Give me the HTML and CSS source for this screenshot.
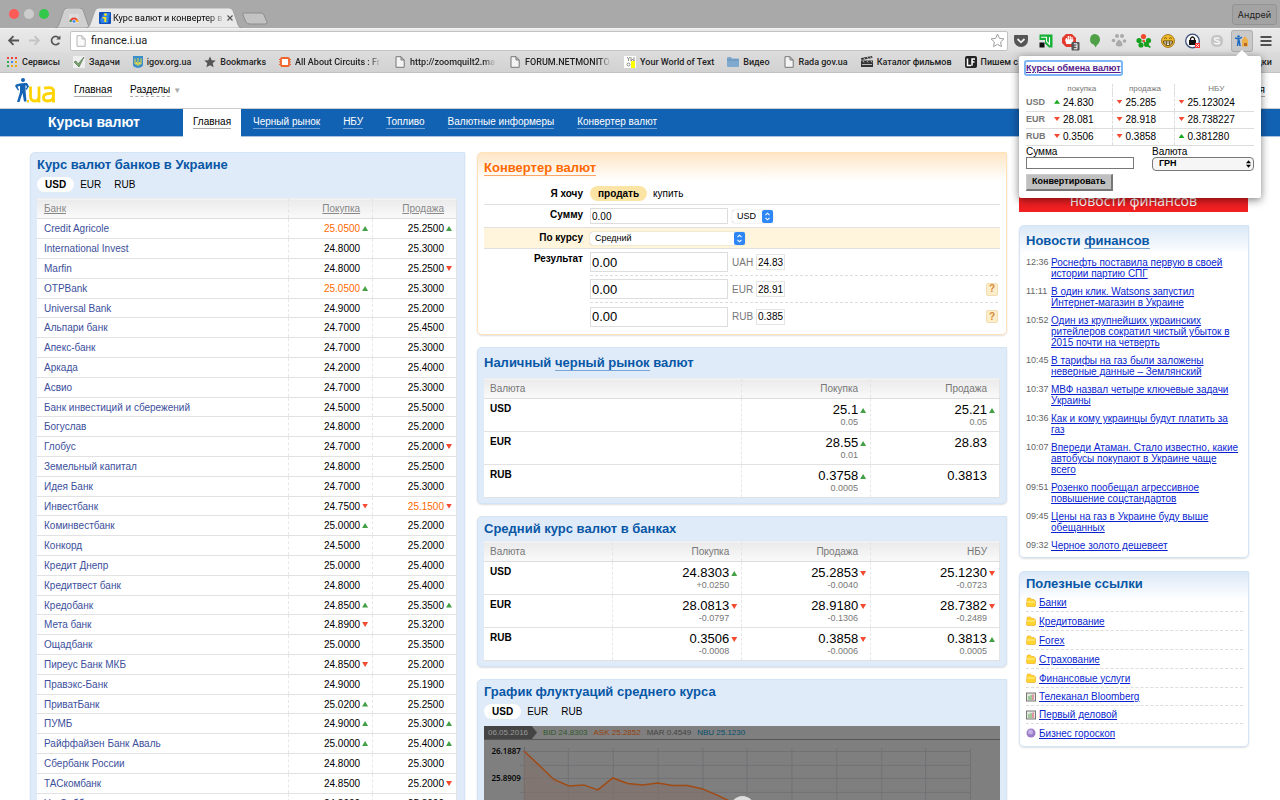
FILE: index.html
```html
<!DOCTYPE html>
<html lang="ru">
<head>
<meta charset="utf-8">
<title>Курс валют и конвертер валют</title>
<link rel="stylesheet" href="styles.css">
</head>
<body>
<svg class="defs" aria-hidden="true">
  <symbol id="doc" viewBox="0 0 10 12"><path d="M1 .7h5L9.200 4v7.300H1zM6 .7V4h3.200" fill="#f4f4f4" stroke="#777" stroke-width="1"/></symbol>
  <symbol id="chev" viewBox="0 0 11 13"><rect width="11" height="13" rx="2" fill="#2f86f6"/><path d="M3.500 5.200l2-2 2 2M3.500 7.800l2 2 2-2" fill="none" stroke="#fff" stroke-width="1.100"/></symbol>
  <symbol id="folder" viewBox="0 0 10 10"><path d="M1 2.500Q1 1 2 1h2.500l1 1.500H8L9.500 4v4.500q0 1-1 1h-7Q.5 9.500.5 8.500z" fill="#ffd52e" stroke="#f0a519" stroke-width=".6"/><path d="M1 5h8" stroke="#fff0a0" stroke-width="1"/></symbol>
  <symbol id="tv" viewBox="0 0 10 10"><rect x=".5" y="1" width="9" height="8" fill="#e4e9e0" stroke="#777"/><path d="M3 8V4M5 8V3" stroke="#7bb87a" stroke-width="1.300"/><path d="M7 8V2.500" stroke="#e0718c" stroke-width="1.400"/></symbol>
</svg>
<div class="window">
  <header class="tabstrip">
    <div class="lights"><i class="red"></i><i class="grey"></i><i class="green"></i></div>
    <div class="tab pinned">
      <svg class="tabshape" viewBox="0 0 38 20" preserveAspectRatio="none"><path d="M0 20Q3 20 4 17L9 3Q10 0 13 0H26Q29 0 30 3L35 17Q36 20 38 20z" fill="#d0d0d0" stroke="#8c8c8c" stroke-width=".8"/></svg>
      <svg class="ico" viewBox="0 0 12 12"><path d="M1 2h10v9H1z" fill="#ddd"/><path d="M1.500 10a4.500 4.500 0 0 1 9 0z" fill="#e54335"/><path d="M1.500 10a4.500 4.500 0 0 1 .8-2.500L5 10z" fill="#34a853"/><path d="M10.500 10H7l2-3z" fill="#fbc116"/><circle cx="6" cy="9.500" r="1.800" fill="#4285f4" stroke="#fff" stroke-width=".6"/></svg>
    </div>
    <div class="tab active">
      <svg class="tabshape" viewBox="0 0 158 20" preserveAspectRatio="none"><path d="M0 20Q3 20 4 17L9 3Q10 0 13 0H145Q148 0 149 3L154 17Q155 20 158 20z" fill="#e9e9e9" stroke="#8c8c8c" stroke-width=".6"/></svg>
      <svg class="ico" viewBox="0 0 12 12"><rect width="12" height="12" rx="1" fill="#124fb8"/><path d="M1 8l4-7h6L9 11H2z" fill="#2d83e6"/><circle cx="6.500" cy="2.600" r="1.400" fill="#ffe11a"/><path d="M3.500 5h3.800v5h-2V6.500H3.500z" fill="#ffe11a"/></svg>
      <span class="fade tabtitle">Курс валют и конвертер в</span>
      <button class="close" aria-label="Закрыть"><svg viewBox="0 0 6 6"><path d="M.5.5l5 5M5.500.5l-5 5" stroke="#555" stroke-width="1.200"/></svg></button>
    </div>
    <svg class="newtab" viewBox="0 0 26 13"><path d="M2 1h17q2 0 3 2l3 7q1 2-2 2H8q-3 0-4-2L1 3Q0 1 2 1z" fill="#c3c3c3" stroke="#8c8c8c"/></svg>
    <button class="user">Андрей</button>
  </header>

  <div class="toolbar">
    <div class="navs">
      <svg viewBox="0 0 14 14"><path d="M13 7H2.500M7 2.300L2.300 7 7 11.700" fill="none" stroke="#555" stroke-width="2"/></svg>
      <svg viewBox="0 0 14 14"><path d="M1 7h10.500M7 2.300L11.700 7 7 11.700" fill="none" stroke="#c4c4c4" stroke-width="2"/></svg>
      <svg viewBox="0 0 14 14"><path d="M11 9.500A4.500 4.500 0 1 1 10.500 4" fill="none" stroke="#555" stroke-width="1.800"/><path d="M12.300 1.500V6H7.800z" fill="#555"/></svg>
    </div>
    <label class="urlbar">
      <svg class="docico" viewBox="0 0 10 12"><path d="M1 .7h5L9.200 4v7.300H1zM6 .7V4h3.200" fill="#fafafa" stroke="#b5b5b5"/></svg>
      <input type="text" value="finance.i.ua" aria-label="Адрес">
      <svg class="star" viewBox="0 0 14 14"><path d="M7 1l1.800 4 4.200.5-3.100 2.900.8 4.300L7 10.600l-3.700 2.100.8-4.300L1 5.500 5.200 5z" fill="none" stroke="#999" stroke-width=".9"/></svg>
    </label>
    <div class="exts">
      <svg viewBox="0 0 20 20"><path d="M3 5q0-1 1-1h12q1 0 1 1v4a7 7 0 0 1-14 0z" fill="#555"/><path d="M6.500 8l3.500 3.300L13.500 8" fill="none" stroke="#eee" stroke-width="1.800"/></svg>
      <svg viewBox="0 0 20 20"><path d="M3.500 3.500h13v13H13L9 12.500V9H3.500z" fill="#19b038"/><path d="M5 6.300h5.500v4l3 3V6" fill="none" stroke="#fff" stroke-width="1.100"/><rect x="3.500" y="11.500" width="5" height="5" fill="#111"/></svg>
      <svg viewBox="0 0 20 20"><path d="M6 3h6l4 4v5l-4 4H6l-4-4V7z" fill="#e33b2e"/><path d="M6.500 10V7M8.300 9V5M10.200 9V5M12 10V6M5.800 9l1 3.500h4.500L12.800 9z" fill="#fff" stroke="#fff" stroke-width="1.200"/><rect x="11.500" y="11" width="8" height="8.500" rx="1" fill="#555"/><path d="M13.800 12.800h3.200v5h-3.200M14.300 15.200H17" fill="none" stroke="#fff"/></svg>
      <svg viewBox="0 0 20 20"><path d="M9.500 3a5.500 5.500 0 0 1 5.500 5.500c0 3.500-3 5-4.500 8-.5-1.500-1-2.500-2-3A5.500 5.500 0 0 1 9.500 3z" fill="#4fa046"/></svg>
      <svg viewBox="0 0 20 20" fill="#aaa"><circle cx="8" cy="5" r="2"/><circle cx="13" cy="5" r="2"/><circle cx="4.500" cy="9.500" r="1.800"/><circle cx="15.500" cy="10" r="1.800"/><path d="M10 8.500q4 3 3.500 6-3 2-6.500 0Q6 11.500 10 8.500z"/></svg>
      <svg viewBox="0 0 20 20" fill="#16a01d"><circle cx="9.500" cy="5.500" r="2.600" fill="#ef4b2e"/><circle cx="5" cy="9.500" r="2.600"/><circle cx="14.500" cy="9.500" r="2.600"/><circle cx="7" cy="14" r="2.600"/><circle cx="12.500" cy="13.500" r="2.500"/><path d="M9 9l8 7-1.500 1L8 10z"/><circle cx="9.800" cy="10" r="1.300" fill="#ef4b2e"/></svg>
      <svg viewBox="0 0 20 20"><circle cx="10" cy="10" r="6.500" fill="#f0ba28" stroke="#90660e" stroke-width=".8"/><path d="M5.500 10h9q0 4.500-4.500 4.500T5.500 10z" fill="#fff" stroke="#5e450c"/><path d="M6 7.500q1.500-1.500 3 0M11 7.500q1.500-1.500 3 0M5.500 12h9M8.500 10v4M11.500 10v4" fill="none" stroke="#5e450c" stroke-width=".8"/></svg>
      <svg viewBox="0 0 20 20"><circle cx="9.500" cy="10" r="6.800" fill="#fff" stroke="#3b4f79" stroke-width="1.300"/><rect x="6" y="9" width="7" height="5" fill="#111"/><path d="M7.500 9V7.500q2-3 4 0V9" fill="none" stroke="#111" stroke-width="1.300"/><rect x="12" y="12" width="5" height="5" fill="#f33"/><path d="M13 13l3 3m0-3l-3 3" stroke="#fff" stroke-width=".8"/></svg>
      <svg viewBox="0 0 20 20"><rect x="4" y="4" width="12" height="12" rx="5" fill="#c5c5c5"/><path d="M12.500 7.500q-5-1.500-5 .8c0 1.700 5 1 5 3 0 2-4 2-5.500.5" fill="none" stroke="#f5f5f5" stroke-width="1.500"/></svg>
      <svg class="pressed" viewBox="0 0 20 20"><path d="M3 7l4 1 3-2M6.500 8l-1 7M7 9l1 6" stroke="#1b69bf" stroke-width="1.500" fill="none"/><circle cx="6.500" cy="5.500" r="1.300" fill="#1b69bf"/><path d="M10 9l3-4 3 4v6.500h-6z" fill="#edb04c"/><path d="M12 12h3v3h-3z" fill="#b46a20"/></svg>
      <svg viewBox="0 0 20 20"><path d="M4.500 6h11M4.500 10h11M4.500 14h11" stroke="#505050" stroke-width="2.200"/></svg>
    </div>
  </div>

  <nav class="bookmarks">
    <a href="#"><svg viewBox="0 0 12 12"><path d="M1 1h2v2H1zM5 1h2v2H5zM9 1h2v2H9z" fill="#e8453c"/><path d="M1 5h2v2H1z" fill="#34a853"/><path d="M5 5h2v2H5z" fill="#4285f4"/><path d="M9 5h2v2H9zM9 9h2v2H9zM5 9h2v2H5z" fill="#f2a60c"/><path d="M1 9h2v2H1z" fill="#34a853"/></svg>Сервисы</a>
    <a href="#"><svg viewBox="0 0 12 12"><rect width="12" height="12" fill="#eee"/><path d="M1 6l2-1 2 3 6-7-5 10z" fill="#79a96a" stroke="#4c6649" stroke-width=".6"/></svg>Задачи</a>
    <a href="#" class="tight"><svg viewBox="0 0 10 12"><path d="M0 0h10v9q0 2-5 3Q0 11 0 9z" fill="#398fc9"/><path d="M2 2.500V8h6V2.500M5 2v8M3.500 6v2M6.500 6v2" fill="none" stroke="#f5df3c" stroke-width="1"/></svg>igov.org.ua</a>
    <a href="#"><svg viewBox="0 0 12 12"><path d="M6 .5l1.700 3.700 4 .4-3 2.700.9 4L6 9.200l-3.600 2.100.9-4-3-2.700 4-.4z" fill="#555"/></svg>Bookmarks</a>
    <a href="#"><svg viewBox="0 0 12 12"><rect x="2" y="2" width="8" height="8" rx="1" fill="#fff" stroke="#f0642c" stroke-width="1.800"/><path d="M0 3.500h2M0 6h2M0 8.500h2M10 3.500h2M10 6h2M10 8.500h2" stroke="#f0642c"/></svg><span class="fade bm">All About Circuits : Fr</span></a>
    <a href="#"><svg><use href="#doc"/></svg><span class="fade bm">http://zoomquilt2.ma</span></a>
    <a href="#"><svg><use href="#doc"/></svg><span class="fade bm">FORUM.NETMONITO</span></a>
    <a href="#"><svg viewBox="0 0 12 12"><rect width="12" height="12" fill="#fff"/><rect x="7" y="5" width="4" height="7" fill="#ff0"/><path d="M3 1l1.500 2L6 1M4.500 3v2M7 1v4l1.500-2L10 5V1" fill="none" stroke="#666" stroke-width=".7"/><circle cx="4.500" cy="8.500" r="1.500" fill="none" stroke="#666" stroke-width=".7"/></svg>Your World of Text</a>
    <a href="#"><svg viewBox="0 0 12 12"><path d="M0 2q0-1 1-1h3l1 1.500h6q1 0 1 1V10q0 1-1 1H1q-1 0-1-1z" fill="#7fa9cf"/><path d="M0 4h12" stroke="#5d87ad" stroke-width=".7"/></svg>Видео</a>
    <a href="#"><svg><use href="#doc"/></svg>Rada gov.ua</a>
    <a href="#"><svg viewBox="0 0 12 12"><path d="M0 4.500h12V11H0zM0 2l11-2 .5 2L.5 4z" fill="#333"/><path d="M2.500 1.500l1.500 2M6 1l1.500 2M9 .5l1.500 2M2 5l1 1.500M6 5l1 1.500M10 5l1 1.500M1 8.500h10" stroke="#ddd" stroke-width=".8"/></svg>Каталог фильмов</a>
    <a href="#"><svg viewBox="0 0 12 12"><rect width="12" height="12" rx="2" fill="#222"/><path d="M2.500 2.500v7H6M7 9.800V3h3M7 6h2.500" fill="none" stroke="#fff" stroke-width="1.500"/></svg>Пишем с</a>
    <a href="#" class="other">Закладки</a>
  </nav>

  <div class="page">
    <div class="sitehead">
      <svg class="logo" viewBox="0 0 41 25"><circle cx="8" cy="2" r="2" fill="#1563b5"/><path d="M1 6.500Q5 4.500 12 5l2 3.500-2.500 3.500-1-1 1.500-2-1.500-2v5l1 11.500H9L7.500 15 4.500 24H2L5 14V8L2.500 8.500 4 12l-1 .5L0 8z" fill="#1563b5"/><path d="M12 22h2v2.500h-2z" fill="#ffd400"/><path d="M15.500 8.500v9.500q0 5 4 5 4.500 0 4.500-4.500V8.500m0 8v8M29 10.200q9.500-2 9.500 3V24.500m0-9q-10-.8-10 4 0 3.500 3.800 3.500 6.200 0 6.200-5" fill="none" stroke="#ffd400" stroke-width="2.800"/></svg>
      <a href="#">Главная</a>
      <a href="#" class="dash">Разделы</a><span class="more">▼</span>
      <a href="#" class="reg">Регистрация</a>
    </div>
    <nav class="sitenav">
      <strong>Курсы валют</strong>
      <div class="current"><a href="#">Главная</a></div>
      <div class="items"><a href="#">Черный рынок</a><a href="#">НБУ</a><a href="#">Топливо</a><a href="#">Валютные информеры</a><a href="#">Конвертер валют</a></div>
    </nav>

    <main class="columns">
      <section class="panel banks">
        <h2>Курс валют банков в Украине</h2>
        <div class="pills"><button class="on">USD</button><button>EUR</button><button>RUB</button></div>
        <table class="grid">
          <thead><tr><th><a href="#">Банк</a></th><th class="n"><a href="#">Покупка</a></th><th class="n"><a href="#">Продажа</a></th></tr></thead>
          <tbody>
            <tr><td><a href="#">Credit Agricole</a></td><td class="up best">25.0500</td><td class="up">25.2500</td></tr>
            <tr><td><a href="#">International Invest</a></td><td>24.8000</td><td>25.3000</td></tr>
            <tr><td><a href="#">Marfin</a></td><td>24.8000</td><td class="down">25.2500</td></tr>
            <tr><td><a href="#">OTPBank</a></td><td class="up best">25.0500</td><td>25.3000</td></tr>
            <tr><td><a href="#">Universal Bank</a></td><td>24.9000</td><td>25.2000</td></tr>
            <tr><td><a href="#">Альпари банк</a></td><td>24.7000</td><td>25.4500</td></tr>
            <tr><td><a href="#">Апекс-банк</a></td><td>24.7000</td><td>25.3000</td></tr>
            <tr><td><a href="#">Аркада</a></td><td>24.2000</td><td>25.4000</td></tr>
            <tr><td><a href="#">Асвио</a></td><td>24.7000</td><td>25.3000</td></tr>
            <tr><td><a href="#">Банк инвестиций и сбережений</a></td><td>24.5000</td><td>25.5000</td></tr>
            <tr><td><a href="#">Богуслав</a></td><td>24.8000</td><td>25.2000</td></tr>
            <tr><td><a href="#">Глобус</a></td><td>24.7000</td><td class="down">25.2000</td></tr>
            <tr><td><a href="#">Земельный капитал</a></td><td>24.8000</td><td>25.2500</td></tr>
            <tr><td><a href="#">Идея Банк</a></td><td>24.7000</td><td>25.3000</td></tr>
            <tr><td><a href="#">Инвестбанк</a></td><td class="down">24.7500</td><td class="down best">25.1500</td></tr>
            <tr><td><a href="#">Коминвестбанк</a></td><td class="up">25.0000</td><td>25.2000</td></tr>
            <tr><td><a href="#">Конкорд</a></td><td>24.5000</td><td>25.2000</td></tr>
            <tr><td><a href="#">Кредит Днепр</a></td><td>25.0000</td><td>25.4000</td></tr>
            <tr><td><a href="#">Кредитвест банк</a></td><td>24.8000</td><td>25.4000</td></tr>
            <tr><td><a href="#">Кредобанк</a></td><td class="up">24.8500</td><td class="up">25.3500</td></tr>
            <tr><td><a href="#">Мета банк</a></td><td class="down">24.8900</td><td>25.3200</td></tr>
            <tr><td><a href="#">Ощадбанк</a></td><td>25.0000</td><td>25.3500</td></tr>
            <tr><td><a href="#">Пиреус Банк МКБ</a></td><td class="down">24.8500</td><td>25.2000</td></tr>
            <tr><td><a href="#">Правэкс-Банк</a></td><td>24.9000</td><td>25.1900</td></tr>
            <tr><td><a href="#">ПриватБанк</a></td><td class="up">25.0200</td><td>25.2500</td></tr>
            <tr><td><a href="#">ПУМБ</a></td><td class="up">24.9000</td><td class="up">25.3000</td></tr>
            <tr><td><a href="#">Райффайзен Банк Аваль</a></td><td class="up">25.0000</td><td class="up">25.4000</td></tr>
            <tr><td><a href="#">Сбербанк России</a></td><td>24.8000</td><td>25.3000</td></tr>
            <tr><td><a href="#">ТАСкомбанк</a></td><td>24.8500</td><td class="down">25.2000</td></tr>
            <tr><td><a href="#">УкрСиббанк</a></td><td>24.8000</td><td>25.3000</td></tr>
          </tbody>
        </table>
      </section>

      <div class="middle">
        <section class="panel converter">
          <h2><a href="#">Конвертер валют</a></h2>
          <div class="row want"><span class="lab">Я хочу</span><button class="sell">продать</button><button class="buy">купить</button></div>
          <div class="row sum"><label class="lab" for="sum">Сумму</label><input id="sum" class="amount" value="0.00">
            <span class="sel cur"><select aria-label="Валюта суммы"><option>USD</option></select><svg><use href="#chev"/></svg></span></div>
          <div class="row rate"><label class="lab" for="rate">По курсу</label>
            <span class="sel kind"><select id="rate"><option>Средний</option></select><svg><use href="#chev"/></svg></span></div>
          <div class="row results">
            <span class="lab">Результат</span>
            <div class="list">
              <div><input class="amount big" value="0.00" aria-label="Результат UAH"><label for="r1">UAH</label><input id="r1" class="ratev" value="24.83"></div>
              <div><input class="amount big" value="0.00" aria-label="Результат EUR"><label for="r2">EUR</label><input id="r2" class="ratev" value="28.91"><button class="help">?</button></div>
              <div><input class="amount big" value="0.00" aria-label="Результат RUB"><label for="r3">RUB</label><input id="r3" class="ratev" value="0.385"><button class="help">?</button></div>
            </div>
          </div>
        </section>

        <section class="panel market">
          <h2>Наличный <a href="#">черный рынок</a> валют</h2>
          <table class="grid rates three">
            <thead><tr><th>Валюта</th><th class="n">Покупка</th><th class="n">Продажа</th></tr></thead>
            <tbody>
              <tr><th>USD</th><td><span class="up">25.1</span><small>0.05</small></td><td><span class="up">25.21</span><small>0.05</small></td></tr>
              <tr><th>EUR</th><td><span class="up">28.55</span><small>0.01</small></td><td>28.83</td></tr>
              <tr><th>RUB</th><td><span class="up">0.3758</span><small>0.0005</small></td><td>0.3813</td></tr>
            </tbody>
          </table>
        </section>

        <section class="panel average">
          <h2>Средний курс валют в банках</h2>
          <table class="grid rates four">
            <thead><tr><th>Валюта</th><th class="n">Покупка</th><th class="n">Продажа</th><th class="n">НБУ</th></tr></thead>
            <tbody>
              <tr><th>USD</th><td><span class="up">24.8303</span><small>+0.0250</small></td><td><span class="down">25.2853</span><small>-0.0040</small></td><td><span class="down">25.1230</span><small>-0.0723</small></td></tr>
              <tr><th>EUR</th><td><span class="down">28.0813</span><small>-0.0797</small></td><td><span class="down">28.9180</span><small>-0.1306</small></td><td><span class="down">28.7382</span><small>-0.2489</small></td></tr>
              <tr><th>RUB</th><td><span class="down">0.3506</span><small>-0.0008</small></td><td><span class="down">0.3858</span><small>-0.0006</small></td><td><span class="up">0.3813</span><small>0.0005</small></td></tr>
            </tbody>
          </table>
        </section>

        <section class="panel graph">
          <h2>График флуктуаций среднего курса</h2>
          <div class="pills"><button class="on">USD</button><button>EUR</button><button>RUB</button></div>
          <div class="chart">
            <div class="legend"><span class="date">06.05.2016</span><span class="bid">BID 24.8303</span><span class="ask">ASK 25.2852</span><span class="mar">MAR 0.4549</span><span class="nbu">NBU 25.1230</span></div>
            <svg viewBox="0 0 517 120">
              <path d="M36 11.500H487M36 25.500H487M36 38.500H487M36 52.500H487M84.500 8V120M129.500 8V120M174.500 8V120M219.500 8V120M263.500 8V120M308.500 8V120M353.500 8V120M398.500 8V120M442.500 8V120M487.500 8V120" fill="none" stroke="#727276"/>
              <path d="M40.500 7V120" stroke="#66666a"/>
              <path d="M40 11L55 25 70 39.500 85 46 100 45 114 50 129 38 144 43.500 159 45 174 43 189 45.500 204 45.500 219 49 233 55 250 63V120H40z" fill="#80706a" fill-opacity=".7"/>
              <path d="M40 22L56 34 69 47H100L113 59" fill="none" stroke="#777b7a"/>
              <path d="M40 11L55 25 70 39.500 85 46 100 45 114 50 129 38 144 43.500 159 45 174 43 189 45.500 204 45.500 219 49 233 55 250 63" fill="none" stroke="#a04a14" stroke-width="1.500"/>
              <circle cx="259" cy="68" r="12" fill="#ddd"/>
              <g class="axis"><text x="37" y="14">26.1887</text><text x="37" y="41">25.8909</text></g>
            </svg>
          </div>
        </section>
      </div>

      <aside class="side">
        <a href="#" class="banner">новости финансов</a>
        <section class="panel pale news">
          <h2>Новости <a href="#">финансов</a></h2>
          <ul>
            <li><time>12:36</time><a href="#">Роснефть поставила первую в своей истории партию СПГ</a></li>
            <li><time>11:11</time><a href="#">В один клик. Watsons запустил Интернет-магазин в Украине</a></li>
            <li><time>10:52</time><a href="#">Один из крупнейших украинских ритейлеров сократил чистый убыток в 2015 почти на четверть</a></li>
            <li><time>10:45</time><a href="#">В тарифы на газ были заложены неверные данные – Землянский</a></li>
            <li><time>10:37</time><a href="#">МВФ назвал четыре ключевые задачи Украины</a></li>
            <li><time>10:36</time><a href="#">Как и кому украинцы будут платить за<br>газ</a></li>
            <li><time>10:07</time><a href="#">Впереди Атаман. Стало известно, какие автобусы покупают в Украине чаще<br>всего</a></li>
            <li><time>09:51</time><a href="#">Розенко пообещал агрессивное повышение соцстандартов</a></li>
            <li><time>09:45</time><a href="#">Цены на газ в Украине буду выше<br>обещанных</a></li>
            <li><time>09:32</time><a href="#">Черное золото дешевеет</a></li>
          </ul>
        </section>
        <section class="panel pale links">
          <h2>Полезные ссылки</h2>
          <ul>
            <li><svg><use href="#folder"/></svg><a href="#">Банки</a></li>
            <li><svg><use href="#folder"/></svg><a href="#">Кредитование</a></li>
            <li><svg><use href="#folder"/></svg><a href="#">Forex</a></li>
            <li><svg><use href="#folder"/></svg><a href="#">Страхование</a></li>
            <li><svg><use href="#folder"/></svg><a href="#">Финансовые услуги</a></li>
            <li><svg><use href="#tv"/></svg><a href="#">Телеканал Bloomberg</a></li>
            <li><svg><use href="#tv"/></svg><a href="#">Первый деловой</a></li>
            <li><svg viewBox="0 0 10 10"><circle cx="5" cy="5" r="4.500" fill="#9a7cc9"/><circle cx="4.500" cy="4" r="2.500" fill="#c3b0e6"/></svg><a href="#">Бизнес гороскоп</a></li>
          </ul>
        </section>
      </aside>
    </main>
  </div>

  <div class="popup">
    <a href="#" class="ptitle">Курсы обмена валют</a>
    <table>
      <thead><tr><th></th><th>покупка</th><th>продажа</th><th>НБУ</th></tr></thead>
      <tbody>
        <tr><th>USD</th><td class="up">24.830</td><td class="down">25.285</td><td class="down">25.123024</td></tr>
        <tr><th>EUR</th><td class="down">28.081</td><td class="down">28.918</td><td class="down">28.738227</td></tr>
        <tr><th>RUB</th><td class="down">0.3506</td><td class="down">0.3858</td><td class="up">0.381280</td></tr>
      </tbody>
    </table>
    <form class="pform">
      <div><label for="psum">Сумма</label><input id="psum"></div>
      <div class="pc"><label for="pcur">Валюта</label><span class="psel"><select id="pcur"><option>ГРН</option></select><svg viewBox="0 0 6 9"><path d="M0 3.500L3 0l3 3.500zM0 5.500L3 9l3-3.500z"/></svg></span></div>
    </form>
    <button class="pbtn">Конвертировать</button>
  </div>
</div>
</body>
</html>
```
FILE: styles.css
```css
* { box-sizing: border-box; }
body { margin: 0; font: 10px/13px "Liberation Sans", Arial, sans-serif; color: #000; background: #fff; }
button, input, select { font: inherit; color: inherit; border: 0; padding: 0; margin: 0; background: none; border-radius: 0; }
select { appearance: none; }
h2, ul { margin: 0; padding: 0; list-style: none; }
table { border-collapse: collapse; border-spacing: 0; width: 100%; table-layout: fixed; }
td, th { padding: 0; }
.defs { display: none; }
.window { position: relative; display: flex; flex-direction: column; height: 100vh; overflow: hidden; }

/* browser frame */
.tabstrip { display: flex; align-items: flex-end; height: 28px; flex: none; background: #a9a9a9; font: 9px/12px Inter, sans-serif; }
.lights { display: flex; gap: 5px; padding-left: 9px; align-self: center; }
.lights i { width: 10px; height: 10px; border-radius: 50%; }
.red { background: #fc5b57; } .grey { background: #cdcdcd; } .green { background: #34c84a; }
.tab { position: relative; display: flex; align-items: center; height: 20px; }
.tabshape { position: absolute; inset: 0; width: 100%; height: 100%; }
.tab > :not(.tabshape) { position: relative; }
.pinned { width: 36px; margin-left: 6px; padding-left: 13px; }
.active { width: 156px; margin-left: -5px; padding: 0 9px 0 13px; z-index: 1; }
.ico { width: 12px; height: 12px; flex: none; margin-right: 2px; }
.fade { overflow: hidden; white-space: nowrap; -webkit-mask-image: linear-gradient(to right, #000 85%, transparent); mask-image: linear-gradient(to right, #000 85%, transparent); }
.tabtitle { flex: 1; font: 9px/12px Roboto, sans-serif; }
.close { display: flex; justify-content: flex-end; width: 8px; }
.close svg { width: 6px; height: 6px; }
.newtab { width: 26px; height: 13px; margin-bottom: 3px; }
.user { margin: 0 3px 3px auto; width: 45px; height: 21px; border: 1px solid #939393; border-radius: 3px; background: #a3a3a3; color: #222; }
.toolbar { display: flex; align-items: center; height: 24px; flex: none; border-top: 1px solid #f4f4f4; background: linear-gradient(#e9e9e9, #dfdfdf); padding: 0 4px 0 7px; }
.navs { display: flex; gap: 8px; width: 63px; }
.navs svg { width: 13px; height: 13px; }
.urlbar { flex: 1; display: flex; align-items: center; height: 20px; background: #fff; border: 1px solid #c2c2c2; border-radius: 2px; padding: 0 2px 0 5px; margin-right: 3px; }
.docico { width: 10px; height: 12px; margin-right: 5px; }
.urlbar input { flex: 1; font: 11px/16px Roboto, sans-serif; color: #222; }
.star { width: 15px; height: 15px; }
.exts { display: flex; justify-content: space-between; width: 265px; }
.exts svg { width: 20px; height: 20px; }
.exts .pressed { background: #c9c9c9; box-shadow: 0 0 0 1px #b0b0b0; border-radius: 2px; }
.bookmarks { display: flex; align-items: center; gap: 13px; height: 21px; flex: none; padding: 0 8px 0 6px; background: linear-gradient(#dcdcdc, #d2d2d2); border-bottom: 1px solid #c3c3c3; font: 500 9px/12px Roboto, sans-serif; white-space: nowrap; }
.bookmarks a { display: flex; align-items: center; gap: 4px; color: #222; text-decoration: none; }
.bookmarks svg { width: 12px; height: 12px; flex: none; }
.bookmarks .tight svg { width: 10px; }
.bm { width: 86px; }
.bookmarks .other { margin-left: auto; }

/* site header */
.page { flex: 1; overflow: hidden; }
.sitehead { display: flex; align-items: center; height: 36px; border-bottom: 1px solid #ccc; padding: 0 15px; }
.logo { width: 41px; height: 25px; margin-right: 18px; }
.sitehead a { color: #000; text-decoration: none; border-bottom: 1px solid #aaa; line-height: 12px; }
.sitehead .dash { margin-left: 18px; border-bottom-style: dashed; }
.more { color: #aaa; font-size: 8px; margin-left: 3px; }
.sitehead .reg { margin-left: auto; }
.sitenav { display: flex; align-items: center; height: 28px; background: #1262b3; border-bottom: 1px solid #a9c4e0; }
.sitenav strong { width: 183px; padding-left: 5px; text-align: center; font-size: 14px; color: #fff; }
.current { display: flex; align-items: center; height: 28px; background: #fff; padding: 0 10px; }
.sitenav a { text-decoration: none; line-height: 12px; color: #fff; border-bottom: 1px solid #6f9fd2; }
.sitenav .current a { color: #000; border-color: #aaa; }
.items { display: flex; gap: 23px; padding-left: 12px; }

/* panels */
.columns { display: grid; grid-template-columns: 435fr 530fr 230fr; gap: 12px; padding: 15px 31px 0 30px; align-items: start; }
.middle { display: grid; gap: 12px; }
.panel { background: #e0ebf9; border: 1px solid #d3e4f6; border-radius: 5px 0 5px 5px; padding: 4px 6px 6px; box-shadow: 0 1px 2px #ddd; }
.panel h2 { font-size: 13px; line-height: 15px; color: #0857a6; }
.panel h2 a { color: inherit; text-decoration: none; border-bottom: 1px solid #7aa6d3; }
.pills { display: flex; gap: 13px; align-items: center; height: 15px; margin: 5px 0 6px; }
.pills button { height: 15px; }
.pills .on { font-weight: bold; background: #fff; border-radius: 8px; padding: 0 8px; margin-right: -7px; }
.grid { background: #fff; border-right: 1px solid #e4e4e4; }
.grid thead th { height: 20px; background: linear-gradient(#eaeaea, #fafafa); font-weight: normal; text-align: left; color: #777; padding-left: 7px; border-bottom: 1px solid #ddd; border-top: 1px solid #eee; }
.grid thead th.n { text-align: right; padding-right: 12px; border-left: 1px dashed #e4e4e4; }
.grid thead a { color: #888; }
.grid th:first-child { width: 60%; }
.grid td { border-bottom: 1px solid #e2e2e2; border-left: 1px dashed #e8e8e8; text-align: right; padding-right: 12px; }
.grid td:first-child { text-align: left; padding-left: 7px; border-left: 0; }
.banks .grid tbody tr { height: 20px; }
.banks .grid tbody tr:nth-child(5n) { height: 19px; }
.banks td a { color: #3c4f9c; text-decoration: none; }
.grid .best { color: #ff6a00; }
.up::after, .down::after { content: ""; display: inline-block; width: 6px; height: 5px; margin: 0 -8px 1px 2px; background: #43a047; clip-path: polygon(50% 0, 100% 100%, 0 100%); }
.down::after { background: #f44a32; clip-path: polygon(0 0, 100% 0, 50% 100%); }
.banks { padding-right: 7px; }

/* converter */
.converter { background: linear-gradient(#ffe6c6, #fff 28px); border: 1px solid #ffe2b8; padding: 7px 6px 4px; }
.converter h2 a { color: #ff6a00; border-bottom: 1px solid #ffa566; }
.row { display: flex; border-bottom: 1px solid #e0e0e0; }
.lab { width: 99px; margin-right: 7px; text-align: right; font-weight: bold; }
.want { align-items: center; height: 23px; margin-top: 7px; }
.sell { height: 15px; padding: 0 8px; border-radius: 8px; background: #fbe4a4; font-weight: bold; }
.buy { margin-left: 6px; }
.sum { height: 23px; padding-top: 3px; }
.amount { width: 138px; height: 16px; border: 1px solid #ddd; padding: 0 1px; background: #fff; }
.sel { position: relative; height: 13px; font-size: 9px; line-height: 13px; }
.sel select { display: block; width: 100%; height: 13px; padding-left: 5px; background: #fff; border-radius: 3px; box-shadow: 0 0 1px #888; }
.sel svg { position: absolute; right: 0; top: 0; width: 11px; height: 13px; pointer-events: none; }
.cur { width: 41px; margin: 2px 0 0 4px; }
.kind { width: 155px; margin-top: 1px; }
.rate { height: 21px; padding-top: 3px; background: #fff5dd; }
.results { border: 0; }
.results .lab { margin-top: 3px; }
.list { flex: 1; margin-right: 2px; }
.list > div { display: flex; align-items: center; height: 27px; border-bottom: 1px dashed #ddd; color: #777; }
.list > div:last-child { border-bottom: 0; }
.list .big { height: 20px; font-size: 13px; margin-right: 4px; color: #000; }
.list label { width: 21px; }
.ratev { width: 29px; height: 16px; margin-left: 3px; padding: 0 1px; border: 1px solid #e4e4e4; color: #000; }
.help { margin-left: auto; width: 12px; height: 13px; border: 1px solid #f3ddb0; border-radius: 2px; background: #fdeecb; color: #d68a3a; font-weight: bold; line-height: 10px; }

/* rates */
.market { padding-top: 7px; }
.market h2 { margin-bottom: 8px; }
.average h2 { margin-bottom: 5px; }
.rates thead th, .rates tbody th { padding-left: 6px; }
.rates.three th:first-child { width: 50%; }
.rates.four th:first-child { width: 25%; }
.rates tbody tr { height: 33px; }
.rates tbody th { text-align: left; vertical-align: top; padding-top: 3px; border-bottom: 1px solid #e2e2e2; }
.rates td { font-size: 13px; line-height: 15px; vertical-align: top; padding-top: 3px; }
.rates small { display: block; font-size: 9px; line-height: 10px; color: #777; }
.market, .average { padding-bottom: 5px; }

/* chart */
.graph { padding-top: 4px; }
.graph .pills { margin-bottom: 7px; }
.chart { background: #7f7f7f; font-size: 8px; }
.legend { display: flex; align-items: center; gap: 6px; height: 14px; border-bottom: 1px solid #555; }
.date { background: #444; color: #999; height: 13px; padding: 0 9px 0 4px; clip-path: polygon(0 0, 90% 0, 100% 50%, 90% 100%, 0 100%); }
.bid { color: #2f5a2d; } .ask { color: #963f0c; } .mar { color: #444; } .nbu { color: #084f6c; }
.chart svg { display: block; width: 100%; }
.axis { font: 600 8px "Open Sans", sans-serif; text-anchor: end; fill: #000; }

/* side column */
.side { display: grid; gap: 13px; }
.banner { display: flex; align-items: flex-end; justify-content: center; height: 60px; margin-right: 1px; padding-bottom: 2px; background: #f01f22; color: #fff; font: 14px/19px "Open Sans", sans-serif; text-decoration: none; }
.pale { background: linear-gradient(#dbe8f7, #fff 28px); padding: 7px 5px 6px 6px; }
.news li { display: flex; line-height: 11px; margin-bottom: 7px; }
.news h2 { margin-bottom: 9px; }
.news time { flex: none; width: 25px; font-size: 9px; color: #666; }
.news li:last-child { margin-bottom: 0; }
.side li a { color: #0a1fd0; }
.links { padding: 4px 5px 4px 6px; }
.links h2 { margin-bottom: 2px; }
.links li { display: flex; align-items: center; gap: 3px; height: 19px; border-bottom: 1px dashed #ddd; }
.links li:nth-child(n+6) { height: 18px; }
.links li:last-child { border: 0; }
.links svg { width: 10px; height: 10px; }

/* extension popup */
.popup { position: absolute; top: 56px; right: 19px; width: 242px; height: 142px; padding: 5px 7px; background: #fff; border-radius: 2px; box-shadow: 0 2px 8px rgba(0,0,0,.5); }
.popup::before { content: ""; position: absolute; top: -6px; right: 13px; width: 12px; height: 6px; background: #fff; clip-path: polygon(50% 0, 100% 100%, 0 100%); }
.ptitle { display: inline-block; line-height: 12px; font-size: 9px; font-weight: bold; color: #551a8b; box-shadow: 0 0 0 2px #7db6f5; border-radius: 1px; }
.popup table { margin-top: 10px; }
.popup thead th { font-weight: normal; font-size: 8px; line-height: 10px; color: #777; }
.popup tbody th { text-align: left; font-size: 9px; color: #777; border-bottom: 1px solid #ddd; }
.popup tbody tr { height: 17px; }
.popup th:first-child { width: 26px; }
.popup th:nth-child(2) { width: 60px; }
.popup th:nth-child(3) { width: 62px; }
.popup td { border-bottom: 1px solid #ddd; padding-left: 2px; }
.popup td + td, .popup thead th + th + th { border-left: 1px dashed #ddd; padding-left: 4px; }
.popup td::after { content: none; }
.popup td::before { content: ""; display: inline-block; width: 6px; height: 4px; margin: 0 3px 2px 0; background: #f44a32; clip-path: polygon(0 0, 100% 0, 50% 100%); }
.popup .up::before { background: #17a81d; clip-path: polygon(50% 0, 100% 100%, 0 100%); }
.pform { display: flex; justify-content: space-between; line-height: 11px; }
.pform label { display: block; }
.pform input { display: block; width: 108px; height: 12px; border: 1px solid #777; }
.pc { width: 102px; }
.psel { position: relative; display: block; }
.psel select { display: block; width: 100%; height: 14px; border: 1px solid #777; border-radius: 4px; padding-left: 6px; background: #f6f6f6; font-size: 9px; line-height: 11px; font-weight: bold; }
.psel svg { position: absolute; right: 3px; top: 3px; width: 5px; height: 8px; }
.pbtn { height: 17px; margin-top: 3px; padding: 0 5px; background: #c0c0c0; border: 1px solid #ccc; border-right: 2px solid #777; border-bottom: 2px solid #777; font: bold 9px/13px "Liberation Sans", Arial, sans-serif; }
```
